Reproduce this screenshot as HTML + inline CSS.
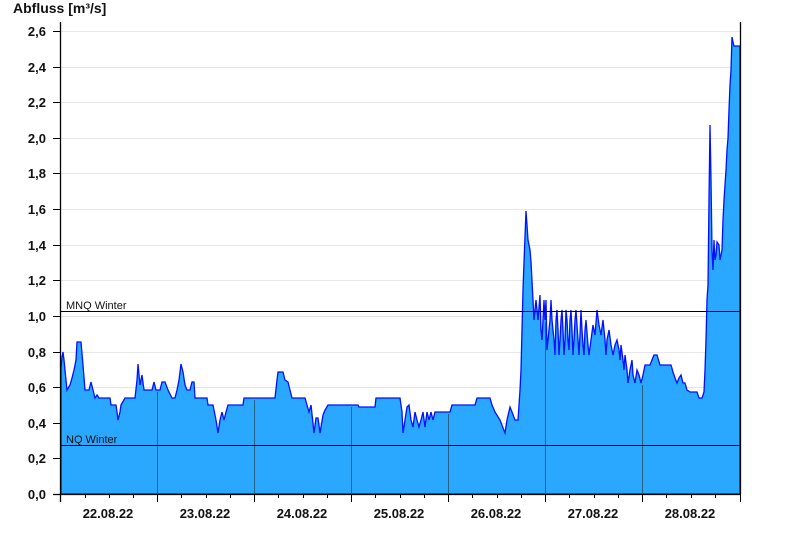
<!DOCTYPE html>
<html><head><meta charset="utf-8"><style>
body{margin:0;background:#fff;width:800px;height:550px;overflow:hidden}
svg text{font-family:"Liberation Sans",Arial,sans-serif;font-weight:bold;font-size:13px;fill:#111}
</style></head><body>
<svg width="800" height="550" viewBox="0 0 800 550">
<text x="13" y="13" style="font-size:14px">Abfluss [m³/s]</text>
<g stroke="#e6e6e6" stroke-width="1">
<line x1="61" y1="31.5" x2="740" y2="31.5"/><line x1="61" y1="67.5" x2="740" y2="67.5"/>
<line x1="61" y1="102.5" x2="740" y2="102.5"/><line x1="61" y1="138.5" x2="740" y2="138.5"/>
<line x1="61" y1="173.5" x2="740" y2="173.5"/><line x1="61" y1="209.5" x2="740" y2="209.5"/>
<line x1="61" y1="245.5" x2="740" y2="245.5"/><line x1="61" y1="280.5" x2="740" y2="280.5"/>
<line x1="61" y1="316.5" x2="740" y2="316.5"/><line x1="61" y1="352.5" x2="740" y2="352.5"/>
<line x1="61" y1="387.5" x2="740" y2="387.5"/><line x1="61" y1="423.5" x2="740" y2="423.5"/>
<line x1="61" y1="458.5" x2="740" y2="458.5"/>
</g>
<polygon fill="#2aa8ff" stroke="#0010ff" stroke-width="1.3" stroke-linejoin="miter" points="61,494 61,368 62,357 63,352 64,360 65,370 67,390 70,385 72,378 74,370 76,360 77,342 81,342 83,365 85,390 89,390 91,382 93,390 95,398 97,395 99,398 110,398 111,405 116,405 117,412 118,420 120,412 121,405 125,398 135,398 137,380 138,364 140,385 142,375 144,390 152,390 154,382 156,390 160,390 162,382 165,382 168,390 172,398 175,398 177,390 179,380 181,364 183,372 185,385 187,390 190,390 192,382 194,382 195,398 207,398 208,405 213,405 216,420 218,433 220,420 222,412 224,420 226,412 228,405 243,405 244,398 275,398 277,380 278,372 283,372 285,380 288,382 290,390 292,398 296,398 305,398 307,405 309,412 311,405 314,433 316,418 318,418 320,433 323,415 325,410 328,405 358,405 359,407 375,407 376,398 400,398 402,412 403,433 405,420 407,407 409,405 411,420 413,427 415,412 417,420 419,427 421,420 423,412 425,427 427,412 429,420 431,412 433,420 435,412 437,412 450,412 452,405 475,405 477,398 490,398 492,405 495,412 500,420 505,433 507,420 510,407 512,412 515,420 518,420 520,390 521,370 522,330 523,290 524,262 526,211 527,225 528,240 530,250 531,262 533,300 534,320 536,300 537,310 538,320 540,295 541,330 542,340 544,300 545,320 546,300 547,350 548,340 550,320 551,300 552,320 554,340 555,355 556,320 557,310 558,330 559,355 560,340 561,320 562,310 563,330 564,355 565,340 566,310 567,320 568,340 569,350 570,320 571,310 572,330 573,355 574,340 575,320 576,310 578,340 579,355 580,335 581,310 582,330 583,345 584,355 585,330 586,320 588,345 589,355 591,340 593,325 595,335 597,310 599,325 601,335 603,320 605,340 606,355 607,340 609,330 611,345 613,355 615,345 617,340 619,350 620,360 621,345 623,360 624,370 625,355 627,370 628,383 630,370 632,360 633,375 635,383 637,370 639,375 641,383 643,375 645,365 650,365 652,360 654,355 657,355 660,365 671,365 673,372 675,378 677,383 679,378 681,375 683,383 685,383 687,390 690,392 697,392 699,398 702,398 704,392 705,370 706,340 707,300 708,285 709,200 710,125 711,180 712,250 713,270 714,240 715,260 716,255 717,242 719,245 720,260 722,250 723,220 724,200 726,170 727,150 728,138 729,110 730,85 731,70 732,37 733,42 734,46 740,46 740,494"/>
<g stroke="#24607f" stroke-width="1">
<line x1="157.5" y1="392" x2="157.5" y2="494"/><line x1="254.5" y1="400" x2="254.5" y2="494"/>
<line x1="351.5" y1="407" x2="351.5" y2="494"/><line x1="448.5" y1="414" x2="448.5" y2="494"/>
<line x1="545.5" y1="322" x2="545.5" y2="494"/><line x1="642.5" y1="385" x2="642.5" y2="494"/>
</g>
<line x1="61" y1="311.5" x2="740" y2="311.5" stroke="#000" stroke-width="1"/>
<line x1="61" y1="445.5" x2="740" y2="445.5" stroke="#000" stroke-width="1"/>
<text x="66" y="309" style="font-weight:normal;font-size:11px">MNQ Winter</text>
<text x="66" y="443" style="font-weight:normal;font-size:11px">NQ Winter</text>
<g stroke="#000" stroke-width="1.3" fill="none">
<line x1="60.5" y1="22" x2="60.5" y2="502"/>
<line x1="740.5" y1="22" x2="740.5" y2="494"/>
<line x1="53" y1="494.5" x2="741" y2="494.5"/>
</g>
<g stroke="#000" stroke-width="1">
<line x1="53" y1="31.5" x2="61" y2="31.5"/><line x1="53" y1="67.5" x2="61" y2="67.5"/>
<line x1="53" y1="102.5" x2="61" y2="102.5"/><line x1="53" y1="138.5" x2="61" y2="138.5"/>
<line x1="53" y1="173.5" x2="61" y2="173.5"/><line x1="53" y1="209.5" x2="61" y2="209.5"/>
<line x1="53" y1="245.5" x2="61" y2="245.5"/><line x1="53" y1="280.5" x2="61" y2="280.5"/>
<line x1="53" y1="316.5" x2="61" y2="316.5"/><line x1="53" y1="352.5" x2="61" y2="352.5"/>
<line x1="53" y1="387.5" x2="61" y2="387.5"/><line x1="53" y1="423.5" x2="61" y2="423.5"/>
<line x1="53" y1="458.5" x2="61" y2="458.5"/>
<line x1="157.5" y1="494" x2="157.5" y2="502"/><line x1="254.5" y1="494" x2="254.5" y2="502"/>
<line x1="351.5" y1="494" x2="351.5" y2="502"/><line x1="448.5" y1="494" x2="448.5" y2="502"/>
<line x1="545.5" y1="494" x2="545.5" y2="502"/><line x1="642.5" y1="494" x2="642.5" y2="502"/>
<line x1="740.5" y1="494" x2="740.5" y2="502"/>
<line x1="85.5" y1="494" x2="85.5" y2="498"/><line x1="109.5" y1="494" x2="109.5" y2="498"/><line x1="133.5" y1="494" x2="133.5" y2="498"/>
<line x1="181.5" y1="494" x2="181.5" y2="498"/><line x1="206.5" y1="494" x2="206.5" y2="498"/><line x1="230.5" y1="494" x2="230.5" y2="498"/>
<line x1="278.5" y1="494" x2="278.5" y2="498"/><line x1="303.5" y1="494" x2="303.5" y2="498"/><line x1="327.5" y1="494" x2="327.5" y2="498"/>
<line x1="375.5" y1="494" x2="375.5" y2="498"/><line x1="400.5" y1="494" x2="400.5" y2="498"/><line x1="424.5" y1="494" x2="424.5" y2="498"/>
<line x1="472.5" y1="494" x2="472.5" y2="498"/><line x1="497.5" y1="494" x2="497.5" y2="498"/><line x1="521.5" y1="494" x2="521.5" y2="498"/>
<line x1="569.5" y1="494" x2="569.5" y2="498"/><line x1="594.5" y1="494" x2="594.5" y2="498"/><line x1="618.5" y1="494" x2="618.5" y2="498"/>
<line x1="666.5" y1="494" x2="666.5" y2="498"/><line x1="691.5" y1="494" x2="691.5" y2="498"/><line x1="715.5" y1="494" x2="715.5" y2="498"/>
</g>
<g text-anchor="end">
<text x="46" y="36">2,6</text><text x="46" y="72">2,4</text><text x="46" y="107">2,2</text>
<text x="46" y="143">2,0</text><text x="46" y="178">1,8</text><text x="46" y="214">1,6</text>
<text x="46" y="250">1,4</text><text x="46" y="285">1,2</text><text x="46" y="321">1,0</text>
<text x="46" y="357">0,8</text><text x="46" y="392">0,6</text><text x="46" y="428">0,4</text>
<text x="46" y="463">0,2</text><text x="46" y="499">0,0</text>
</g>
<g text-anchor="middle">
<text x="108" y="518">22.08.22</text><text x="205" y="518">23.08.22</text>
<text x="302" y="518">24.08.22</text><text x="399" y="518">25.08.22</text>
<text x="496" y="518">26.08.22</text><text x="593" y="518">27.08.22</text>
<text x="690" y="518">28.08.22</text>
</g>
</svg>
</body></html>
